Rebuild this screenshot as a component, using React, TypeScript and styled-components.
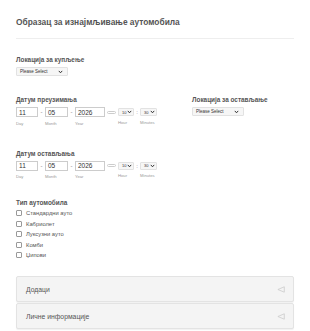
import React from "react";
import styled, { createGlobalStyle } from "styled-components";

const Global = createGlobalStyle`
  html, body { margin: 0; padding: 0; background: #fff; }
  body { font-family: "Liberation Sans", Arial, sans-serif; color: #555; }
`;

const Page = styled.div`
  width: 310px;
  height: 331px;
  overflow: hidden;
  padding: 16px 16px 0 16px;
  box-sizing: border-box;
`;

const Title = styled.h1`
  margin: 0;
  font-size: 8.4px;
  font-weight: bold;
  color: #555;
  padding: 1px 0 11px 0;
  border-bottom: 1px solid #eee;
  width: 278px;
`;

const Field = styled.div<{ $top?: number }>`
  margin-top: ${(p) => p.$top ?? 20}px;
`;

const Label = styled.div`
  font-size: 6.4px;
  font-weight: bold;
  color: #555;
  margin-bottom: 4px;
`;

const Row = styled.div`
  display: flex;
`;

const LeftCol = styled.div`
  width: 176px;
`;

const Select = styled.div<{ $w: number }>`
  width: ${(p) => p.$w}px;
  height: 9px;
  box-sizing: border-box;
  border: 1px solid #e2e2e2;
  border-radius: 1px;
  background: #f6f6f6;
  font-size: 4.5px;
  color: #333;
  display: flex;
  align-items: center;
  justify-content: space-between;
  padding: 0 4px 0 3px;
`;

const Chevron = () => (
  <svg width="5" height="4" viewBox="0 0 5 4">
    <path d="M0.8 0.9 L2.5 2.8 L4.2 0.9" fill="none" stroke="#333" strokeWidth="1" />
  </svg>
);

const DateLine = styled.div`
  display: flex;
  align-items: flex-start;
`;

const Part = styled.div`
  display: flex;
  flex-direction: column;
`;

const Box = styled.div<{ $w: number }>`
  width: ${(p) => p.$w}px;
  height: 10px;
  box-sizing: border-box;
  border: 1px solid #ccc;
  font-size: 6.5px;
  color: #333;
  padding-left: 2px;
  display: flex;
  align-items: center;
`;

const Sub = styled.div`
  font-size: 4.2px;
  color: #999;
  margin-top: 3.5px;
`;

const Sep = styled.span<{ $w: number }>`
  width: ${(p) => p.$w}px;
  height: 10px;
  display: flex;
  align-items: center;
  justify-content: center;
  font-size: 6px;
  color: #777;
`;

const TimeSelect = styled(Select)`
  height: 8px;
  margin-top: 1px;
  padding: 0 1px 0 3px;
  font-size: 4px;
`;

const Pill = styled.div`
  width: 9px;
  height: 10px;
  display: flex;
  align-items: center;
  margin: 0 2px 0 2px;
  &::before {
    content: "";
    width: 9px;
    height: 3px;
    border: 1px solid #ccc;
    border-radius: 2px;
    box-sizing: border-box;
  }
`;

const CheckList = styled.div`
  display: flex;
  flex-direction: column;
  gap: 4.5px;
`;

const CheckRow = styled.label`
  display: flex;
  align-items: center;
  font-size: 5.8px;
  color: #555;
  height: 6px;
`;

const Check = styled.span`
  width: 6px;
  height: 6px;
  box-sizing: border-box;
  border: 1px solid #999;
  border-radius: 1px;
  margin-right: 4px;
`;

const Panels = styled.div`
  margin-top: 18px;
  display: flex;
  flex-direction: column;
  gap: 1px;
  width: 278px;
`;

const Panel = styled.div`
  height: 26px;
  box-sizing: border-box;
  border: 1px solid #e3e3e3;
  border-radius: 2px;
  background: #f4f4f4;
  display: flex;
  align-items: center;
  justify-content: space-between;
  padding: 0 8px 0 9px;
  font-size: 6.8px;
  color: #555;
  box-shadow: 0 1px 1px rgba(0, 0, 0, 0.06);
`;

const Arrow = () => (
  <svg width="8" height="7" viewBox="0 0 8 7">
    <path d="M7.3 0.8 L0.9 3.5 L7.3 6.2 Z" fill="none" stroke="#ccc" strokeWidth="0.8" strokeLinejoin="round" />
  </svg>
);

const DateField: React.FC<{ label: string }> = ({ label }) => (
  <div>
    <Label>{label}</Label>
    <DateLine>
      <Part>
        <Box $w={22}>11</Box>
        <Sub>Day</Sub>
      </Part>
      <Sep $w={7}>-</Sep>
      <Part>
        <Box $w={23}>05</Box>
        <Sub>Month</Sub>
      </Part>
      <Sep $w={7}>-</Sep>
      <Part>
        <Box $w={30}>2026</Box>
        <Sub>Year</Sub>
      </Part>
      <Pill />
      <Part>
        <TimeSelect $w={16}>
          10 <Chevron />
        </TimeSelect>
        <Sub>Hour</Sub>
      </Part>
      <Sep $w={6}>:</Sep>
      <Part>
        <TimeSelect $w={17}>
          30 <Chevron />
        </TimeSelect>
        <Sub>Minutes</Sub>
      </Part>
    </DateLine>
  </div>
);

const cars = ["Стандардни ауто", "Кабриолет", "Луксузни ауто", "Комби", "Џипови"];

export default function App() {
  return (
    <Page>
      <Global />
      <Title>Образац за изнајмљивање аутомобила</Title>
      <Field $top={17}>
        <Label>Локација за купљење</Label>
        <Select $w={52}>
          Please Select <Chevron />
        </Select>
      </Field>
      <Field $top={20}>
        <Row>
          <LeftCol>
            <DateField label="Датум преузимања" />
          </LeftCol>
          <div>
            <Label>Локација за остављање</Label>
            <Select $w={52}>
              Please Select <Chevron />
            </Select>
          </div>
        </Row>
      </Field>
      <Field $top={24}>
        <DateField label="Датум остављања" />
      </Field>
      <Field $top={20}>
        <Label>Тип аутомобила</Label>
        <CheckList>
          {cars.map((c) => (
            <CheckRow key={c}>
              <Check />
              {c}
            </CheckRow>
          ))}
        </CheckList>
      </Field>
      <Panels>
        <Panel>
          Додаци <Arrow />
        </Panel>
        <Panel>
          Личне информације <Arrow />
        </Panel>
      </Panels>
    </Page>
  );
}
